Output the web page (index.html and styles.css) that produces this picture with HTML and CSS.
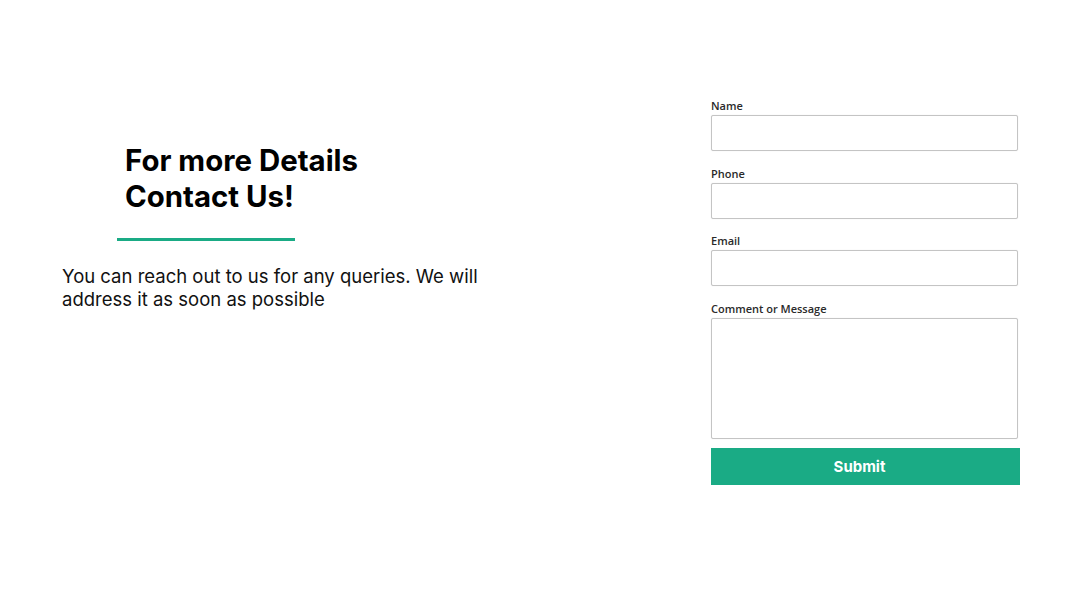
FILE: index.html
```html
<!DOCTYPE html>
<html lang="en">
<head>
<meta charset="utf-8">
<title>Contact Us</title>
<link rel="stylesheet" href="styles.css">
</head>
<body>
<main class="page">
  <section class="intro">
    <h1 class="title">For more Details<br>Contact Us!</h1>
    <div class="rule"></div>
    <p class="lead">You can reach out to us for any queries. We will address it as soon as possible</p>
  </section>
  <form class="contact">
    <div class="field">
      <label class="label">Name</label>
      <input class="input" type="text">
    </div>
    <div class="field">
      <label class="label">Phone</label>
      <input class="input" type="text">
    </div>
    <div class="field">
      <label class="label">Email</label>
      <input class="input" type="text">
    </div>
    <div class="field">
      <label class="label">Comment or Message</label>
      <textarea class="input area"></textarea>
    </div>
    <button class="submit" type="button">Submit</button>
  </form>
</main>
</body>
</html>
```

FILE: styles.css
```css
* { box-sizing: border-box; }
html, body { margin: 0; padding: 0; background: #fff; }
.page {
  width: 1084px;
  height: 610px;
  display: flex;
  font-family: Inter, "Liberation Sans", sans-serif;
}
.intro {
  width: 711px;
  flex-shrink: 0;
  padding-left: 62px;
  padding-top: 143px;
}
.title {
  margin: 0 0 0 63px;
  font-size: 29.4px;
  line-height: 36px;
  font-weight: 700;
  color: #000;
}
.rule {
  margin: 23px 0 0 55px;
  width: 178px;
  height: 3px;
  background: #1aab85;
}
.lead {
  margin: 24px 0 0 0;
  width: 440px;
  font-size: 18.5px;
  line-height: 23px;
  color: #111;
}
.contact {
  padding-top: 99px;
  width: 310px;
  flex-shrink: 0;
  display: flex;
  flex-direction: column;
}
.field {
  display: flex;
  flex-direction: column;
  margin-bottom: 15.5px;
}
.field:last-of-type { margin-bottom: 9px; }
.label {
  font-family: "Open Sans", sans-serif;
  font-size: 11px;
  font-weight: 600;
  line-height: 14px;
  color: #2a2a2a;
  margin-bottom: 2px;
}
.input {
  width: 307px;
  height: 36px;
  border: 1px solid #c4c4c4;
  border-radius: 2px;
  box-shadow: 0 0 1px rgba(0,0,0,0.15);
  background: #fff;
  margin: 0;
  padding: 0;
  font: inherit;
}
.area {
  height: 121px;
  resize: none;
  display: block;
}
.submit {
  width: 309px;
  height: 37px;
  border: 0;
  border-radius: 0;
  background: #1aab85;
  color: #fff;
  font-family: Inter, "Liberation Sans", sans-serif;
  font-size: 15px;
  font-weight: 700;
  padding: 0 12px 0 0;
  margin: 0;
}
```
